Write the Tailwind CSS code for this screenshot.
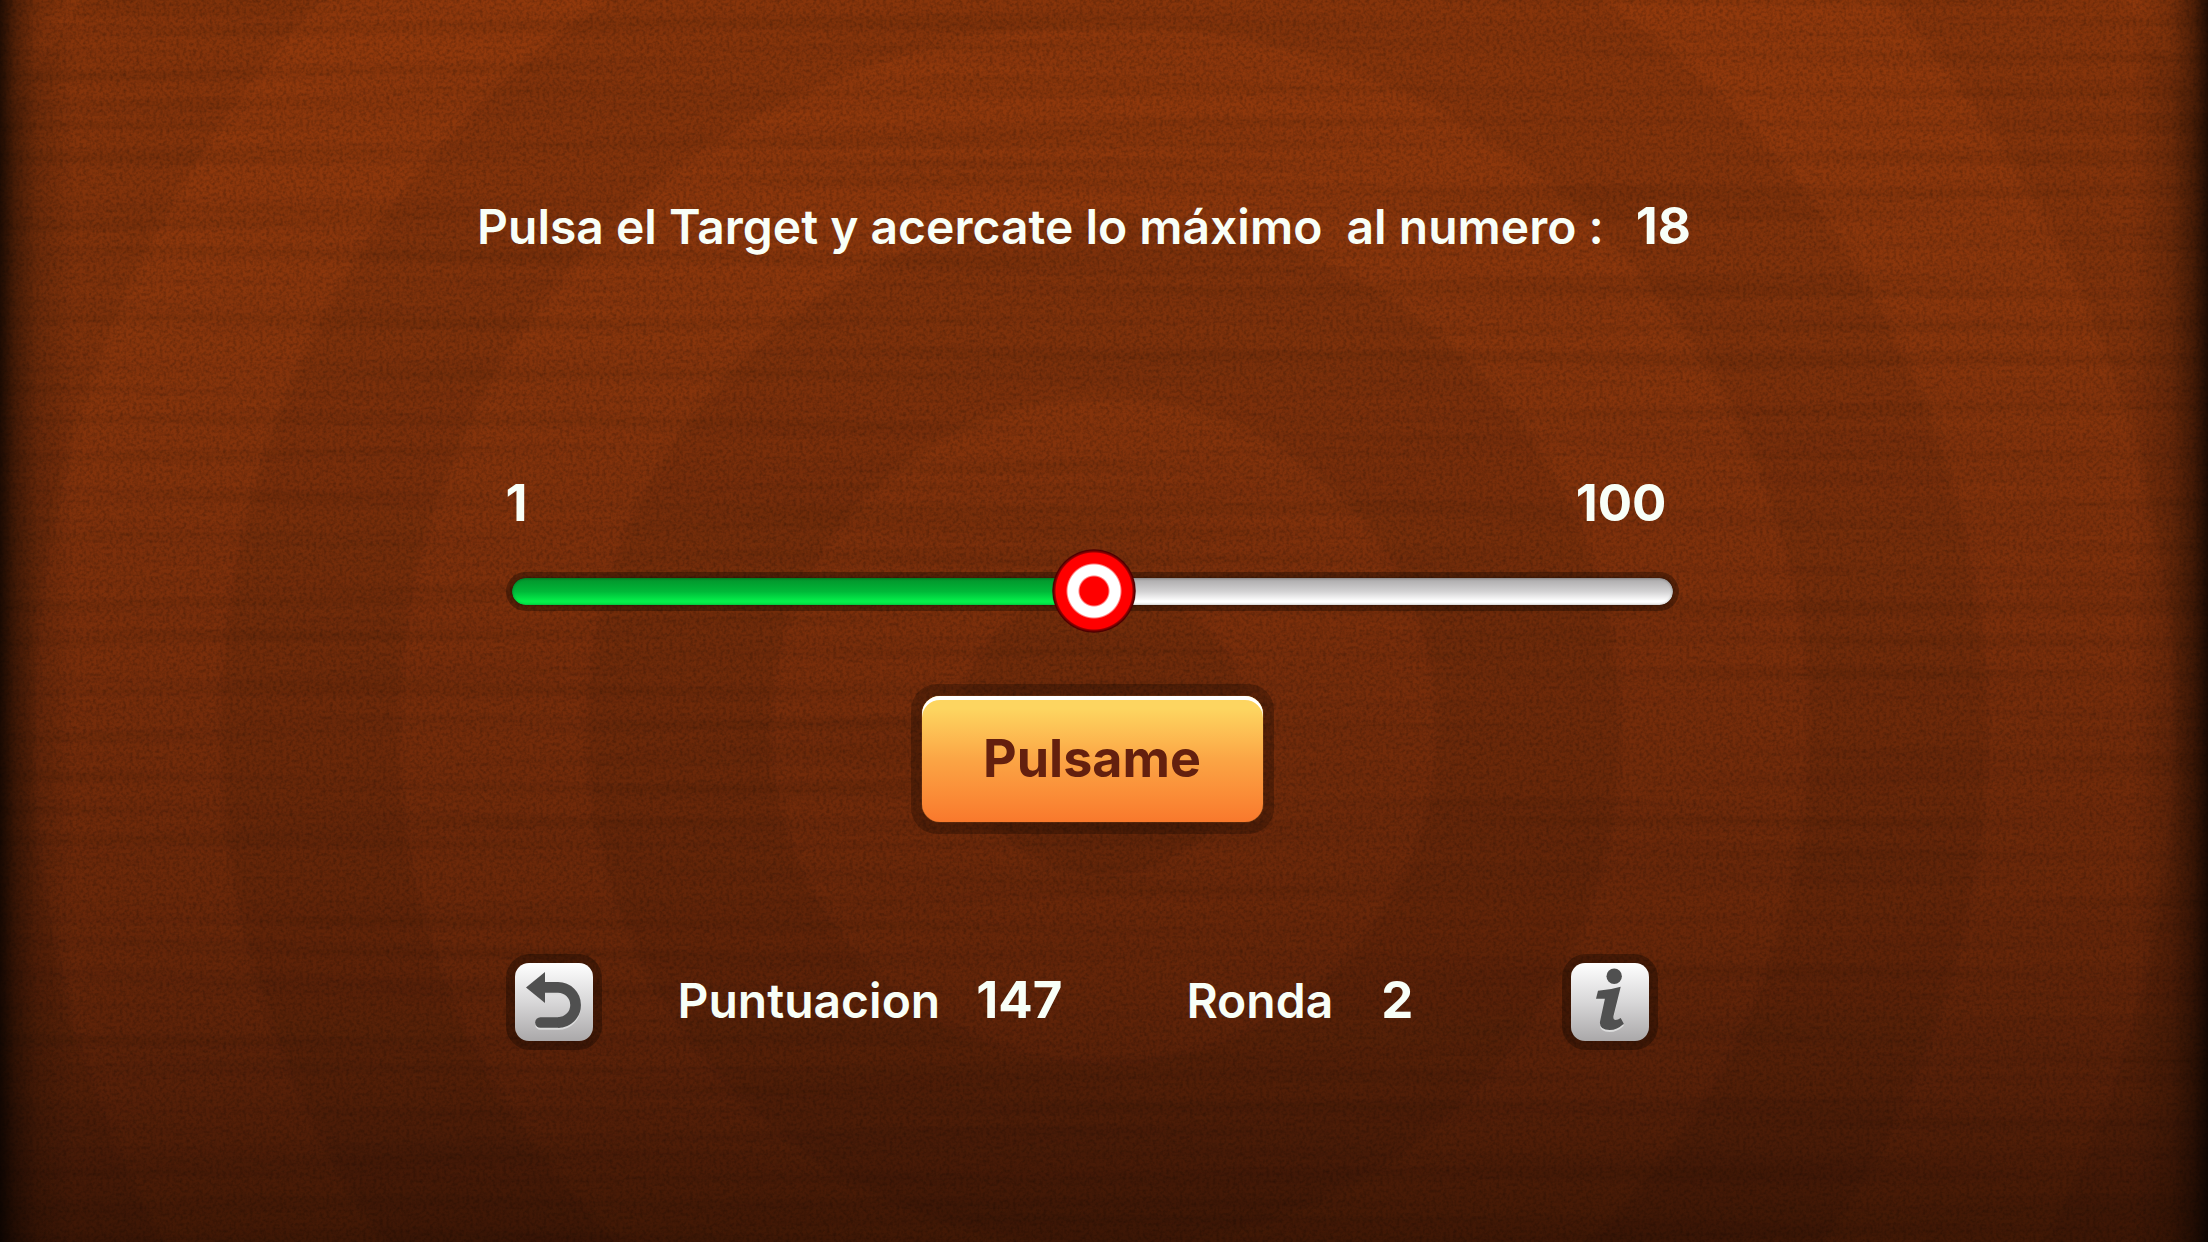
<!DOCTYPE html>
<html lang="es">
<head>
<meta charset="utf-8">
<meta name="viewport" content="width=device-width, initial-scale=1">
<title>Target</title>
<script src="https://cdn.jsdelivr.net/npm/@tailwindcss/browser@4"></script>
</head>
<body class="relative min-h-screen overflow-x-hidden bg-[#5a2208] font-['Inter','Liberation_Sans',sans-serif] font-semibold text-[#f8fff8]">
  <!-- Wooden board with target rings -->
  <svg class="absolute inset-0 h-full w-full" viewBox="0 0 2208 1242" preserveAspectRatio="xMidYMid slice" aria-hidden="true">
    <defs>
      <linearGradient id="wood" x1="0" y1="0" x2="0" y2="1">
        <stop offset="0" stop-color="#92390c"/>
        <stop offset=".25" stop-color="#8a360c"/>
        <stop offset=".5" stop-color="#7c2f0b"/>
        <stop offset=".75" stop-color="#692709"/>
        <stop offset=".88" stop-color="#572008"/>
        <stop offset="1" stop-color="#411805"/>
      </linearGradient>
      <linearGradient id="edge" x1="0" y1="0" x2="1" y2="0">
        <stop offset="0" stop-color="#000" stop-opacity=".75"/>
        <stop offset=".007" stop-color="#000" stop-opacity=".42"/>
        <stop offset=".017" stop-color="#000" stop-opacity=".16"/>
        <stop offset=".034" stop-color="#000" stop-opacity="0"/>
        <stop offset=".966" stop-color="#000" stop-opacity="0"/>
        <stop offset=".983" stop-color="#000" stop-opacity=".16"/>
        <stop offset=".993" stop-color="#000" stop-opacity=".42"/>
        <stop offset="1" stop-color="#000" stop-opacity=".75"/>
      </linearGradient>
      <filter id="grain" x="0" y="0" width="100%" height="100%" color-interpolation-filters="sRGB">
        <feTurbulence type="fractalNoise" baseFrequency=".3" numOctaves="2" seed="4"/>
        <feColorMatrix values="0 0 0 0 0  0 0 0 0 0  0 0 0 0 0  .5 0 0 0 -.19"/>
      </filter>
      <filter id="streak" x="0" y="0" width="100%" height="100%" color-interpolation-filters="sRGB">
        <feTurbulence type="fractalNoise" baseFrequency=".0015 .06" numOctaves="3" seed="11"/>
        <feColorMatrix values="0 0 0 0 0  0 0 0 0 0  0 0 0 0 0  .2 0 0 0 -.08"/>
      </filter>
      <filter id="soft" x="-5%" y="-5%" width="110%" height="110%">
        <feGaussianBlur stdDeviation="3"/>
      </filter>
    </defs>
    <rect width="2208" height="1242" fill="url(#wood)"/>
    <g fill="none" stroke="#000" stroke-opacity=".07" filter="url(#soft)">
      <circle cx="1104" cy="730" r="73" stroke-width="146"/>
      <circle cx="1104" cy="730" r="425" stroke-width="186"/>
      <circle cx="1104" cy="730" r="794" stroke-width="180"/>
      <circle cx="1104" cy="730" r="1163" stroke-width="186"/>
    </g>
    <rect width="2208" height="1242" filter="url(#streak)"/>
    <rect width="2208" height="1242" filter="url(#grain)"/>
    <rect width="2208" height="1242" fill="url(#edge)"/>
  </svg>

  <main class="relative flex flex-col items-center pt-[196px] pr-6 pb-16">
    <h1 class="flex items-baseline gap-8 pr-4 text-[48px] leading-[60px]">
      <span class="whitespace-pre">Pulsa el Target y acercate lo máximo  al numero :</span>
      <output class="text-[51px] font-bold">18</output>
    </h1>

    <div class="mt-[216px] flex w-full max-w-[1173px] flex-col">
      <div class="flex justify-between pr-3 text-[51px] leading-[60px] font-bold">
        <label for="target">1</label>
        <label for="target">100</label>
      </div>
      <div class="relative mt-4 flex h-[84px] items-center">
        <div class="h-[39px] w-full rounded-full bg-black/30 p-[6px]">
          <div class="flex h-[27px] overflow-hidden rounded-full shadow-[0_0_2px_#0008]">
            <div class="w-1/2 rounded-l-full bg-linear-to-b from-[#03922b] via-[#00b838] to-[#05f04a] to-85% shadow-[inset_0_0_3px_#0006]"></div>
            <div class="w-1/2 rounded-r-full bg-linear-to-b from-[#a9a7a8] via-[#d3d2d3] to-[#ffffff] to-85% shadow-[inset_0_0_3px_#0006]"></div>
          </div>
        </div>
        <input id="target" type="range" min="1" max="100" step="any" value="50.7" aria-label="Target"
          class="absolute inset-0 h-full w-full cursor-pointer appearance-none bg-transparent [&::-webkit-slider-thumb]:h-[84px] [&::-webkit-slider-thumb]:w-[84px] [&::-webkit-slider-thumb]:appearance-none [&::-webkit-slider-thumb]:rounded-full [&::-webkit-slider-thumb]:bg-[radial-gradient(circle,#f00_0_14px,#fff_16px_26px,#f00_28px_38px,#900_39px,#4a0000_41px,#0000_43px)]">
      </div>
    </div>

    <button type="button" class="mt-[51px] h-[150px] w-[363px] rounded-[26px] bg-black/25 px-[11px] py-[12px] text-[52px] font-bold text-[#64200e]">
      <span class="flex h-full items-center justify-center rounded-[18px] bg-linear-to-b from-[#fdd560] from-10% via-[#fba545] to-[#f9782c] shadow-[inset_0_4px_0_#fff,0_0_1px_#f9a040]">Pulsame</span>
    </button>

    <div class="mt-[120px] flex w-full max-w-[1173px] items-center pr-[21px] text-[48px] leading-[60px]">
      <button type="button" aria-label="Reiniciar" class="h-24 w-24 shrink-0 rounded-[24px] bg-black/30 p-[9px]">
        <span class="flex h-full w-full items-center justify-center rounded-[14px] bg-linear-to-b from-white via-[#d8d7d8] to-[#aaa8a9]">
          <svg class="h-[78px] w-[78px]" viewBox="9 9 78 78" aria-hidden="true">
            <g transform="translate(0 2)" stroke="#dcdcdc" fill="none" stroke-width="10.7" stroke-linecap="round">
              <path d="M42 33.3H52a17.6 17.6 0 0 1 0 35.2H34.5"/>
            </g>
            <path d="M52 68.5H34.5" fill="none" stroke="#505050" stroke-width="10.7" stroke-linecap="round"/>
            <path d="M38 33.3H52a17.6 17.6 0 0 1 0 35.2" fill="none" stroke="#505050" stroke-width="10.7"/>
            <path d="M20 33.5 39 18V49Z" fill="#505050"/>
          </svg>
        </span>
      </button>
      <p class="ml-[76px] flex items-baseline gap-9 pb-1"><span>Puntuacion</span><output class="text-[51px] font-bold">147</output></p>
      <p class="ml-[124px] flex items-baseline gap-12 pb-1"><span>Ronda</span><output class="text-[51px] font-bold">2</output></p>
      <button type="button" aria-label="Información" class="ml-auto h-24 w-24 shrink-0 rounded-[24px] bg-black/30 p-[9px]">
        <span class="flex h-full w-full items-center justify-center rounded-[14px] bg-linear-to-b from-white via-[#d8d7d8] to-[#aaa8a9]">
          <svg class="h-[78px] w-[78px]" viewBox="9 9 78 78" aria-hidden="true">
            <path transform="translate(0 2)" fill="#dcdcdc" d="M36 36.7Q48 36 58.7 32.7L51.5 62Q51 66 53.5 66Q56 66 58.7 64L61.8 69.7Q55 76 47.7 76Q37 76 38 67.7L42.9 44.7H34Z"/>
            <circle cx="52.2" cy="22.3" r="7.7" fill="#505050"/>
            <path fill="#505050" d="M36 36.7Q48 36 58.7 32.7L51.5 62Q51 66 53.5 66Q56 66 58.7 64L61.8 69.7Q55 76 47.7 76Q37 76 38 67.7L42.9 44.7H34Z"/>
          </svg>
        </span>
      </button>
    </div>
  </main>
</body>
</html>
